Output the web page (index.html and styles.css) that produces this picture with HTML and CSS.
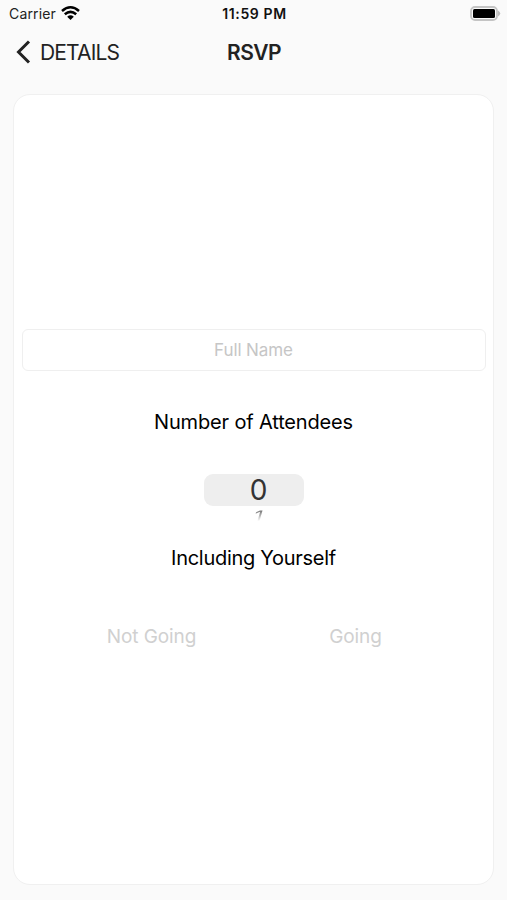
FILE: index.html
```html
<!DOCTYPE html>
<html lang="en">
<head>
<meta charset="utf-8">
<title>RSVP</title>
<link rel="stylesheet" href="styles.css">
</head>
<body>
<header class="status">
  <div class="carrier"><span class="carrier-name">Carrier</span>
    <svg class="wifi" width="19" height="14" viewBox="0 0 19 14"><g fill="none" stroke="#000" stroke-width="2.5"><path d="M1 5Q9.500-2.400 18 5"/><path d="M3.800 8.300Q9.500 3.400 15.200 8.300"/></g><path d="M6.200 10.700Q9.500 8 12.800 10.700L9.500 14Z"/></svg>
  </div>
  <span class="time">11:59 PM</span>
  <svg class="battery" width="31" height="15" viewBox="0 0 31 15"><rect x="1" y="1" width="26" height="13" rx="4" fill="#fafafa" stroke="#c4c4c4" stroke-width="1.8"/><rect x="3" y="3" width="22" height="9" rx="1.500"/><path d="M28 4.500Q32.500 7.500 28 10.500Z" fill="#bdbdbd"/></svg>
</header>
<nav class="nav">
  <a class="back"><svg width="15" height="24" viewBox="0 0 15 24"><path d="M13 1.500L2.500 12L13 22.500" fill="none" stroke="#222" stroke-width="3"/></svg><span class="back-label">DETAILS</span></a>
  <h1 class="title">RSVP</h1>
</nav>
<main class="card">
  <div class="field"><span class="placeholder">Full Name</span></div>
  <p class="label attendees">Number of Attendees</p>
  <div class="picker"><span class="digit">0</span></div>
  <div class="next"><span class="next-digit">1</span></div>
  <p class="label including">Including Yourself</p>
  <div class="actions"><span class="no">Not Going</span><span class="yes">Going</span></div>
</main>
</body>
</html>
```

FILE: styles.css
```css
* { box-sizing: border-box; }
body { margin: 0; height: 900px; overflow: hidden; background: #fafafa; font-family: Inter, sans-serif; color: #000; display: flex; flex-direction: column; }
.status { height: 27px; display: grid; grid-template-columns: 1fr auto 1fr; align-items: center; padding: 0 6px 0 9px; font-size: 14px; }
.carrier { display: flex; align-items: center; gap: 5px; color: #222; }
.carrier-name { letter-spacing: .15px; }
.wifi { margin-top: -2px; }
.time { font-weight: 600; letter-spacing: .65px; margin-left: -1px; color: #111; }
.battery { justify-self: end; margin-top: -1px; }
.nav { height: 50px; display: grid; grid-template-columns: 1fr auto 1fr; align-items: center; padding: 0 16px; color: #222; }
.back { display: flex; align-items: center; gap: 9px; font-size: 21px; letter-spacing: -.85px; }
.title { margin: 0; font-size: 21px; font-weight: 600; letter-spacing: -.55px; padding-left: 1px; }
.card { width: 481px; height: 791px; margin: 17px 0 0 13px; border: 1px solid #f0f0f0; border-radius: 17px; background: #fff; padding: 234px 8px 0; display: flex; flex-direction: column; align-items: center; }
.field { width: 464px; height: 42px; border: 1px solid #efefef; border-radius: 6px; display: flex; align-items: center; justify-content: center; color: #c6c6c6; font-size: 17px; letter-spacing: -.1px; }
.label { margin: 0; font-size: 20px; line-height: 28px; letter-spacing: -.15px; }
.attendees { margin-top: 37px; }
.picker { margin-top: 38px; width: 100px; height: 32px; border-radius: 9px; background: #eee; display: flex; align-items: center; justify-content: center; font-size: 28px; padding-left: 10px; color: #333; }
.next { height: 26px; margin: -3px 0 0 10px; font-size: 22px; line-height: 26px; }
.next-digit { display: block; padding: 0 4px; transform: skewX(-16deg) scaleY(.65); color: transparent; background: linear-gradient(#777 20%, #fff 80%); background-clip: text; }
.including { margin-top: 15px; letter-spacing: -.28px; }
.actions { display: grid; grid-template-columns: 204px 204px; margin-top: 51px; text-align: center; font-size: 19px; line-height: 28px; color: #d0d0d0; letter-spacing: -.1px; }
```
